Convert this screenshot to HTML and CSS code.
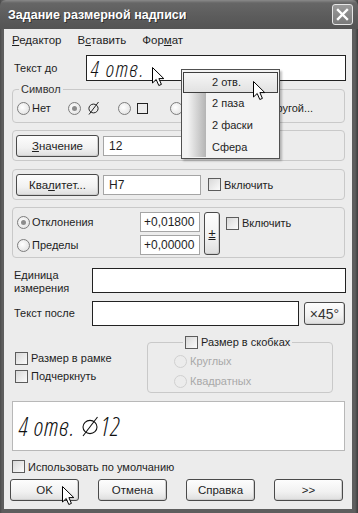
FILE: index.html
```html
<!DOCTYPE html>
<html lang="ru">
<head>
    <meta charset="UTF-8" />
    <title>Задание размерной надписи</title>
    <link rel="stylesheet" href="styles.css">
</head>
<body>
    <div class="window">
        <div class="titlebar">
            <span class="title">Задание размерной надписи</span>
            <span class="close">
                <svg width="13" height="13" viewBox="0 0 13 13"><path d="M2 2 L11 11 M11 2 L2 11" stroke="#fff" stroke-width="2.4" stroke-linecap="square"/></svg>
            </span>
        </div>
        <div class="client">
            <div class="menubar">
                <span><u>Р</u>едактор</span>
                <span>В<u>с</u>тавить</span>
                <span>Фор<u>м</u>ат</span>
            </div>

            <div class="row row-before">
                <span class="label">Текст до</span>
                <div class="field dark big script">4 отв.</div>
            </div>

            <fieldset class="group symbol">
                <legend>Символ</legend>
                <div class="radio-row">
                    <span class="opt w51"><span class="radio"></span>Нет</span>
                    <span class="opt w50"><span class="radio on"></span>
                        <svg class="diam" width="13" height="14" viewBox="0 0 13 14"><ellipse cx="6.5" cy="7.5" rx="4.6" ry="4.4" fill="none" stroke="#222" stroke-width="1"/><path d="M2 13.5 L11.5 1" stroke="#222" stroke-width="1"/></svg>
                    </span>
                    <span class="opt w52"><span class="radio"></span><span class="sq"></span></span>
                    <span class="opt w84"><span class="radio"></span>R</span>
                    <span class="opt"><span class="radio"></span>Другой...</span>
                </div>
            </fieldset>

            <div class="panel panel-value">
                <span class="btn btn-side"><u>З</u>начение</span>
                <div class="field light w-val">12</div>
            </div>

            <div class="panel panel-kval">
                <span class="btn btn-side">Ква<u>л</u>итет...</span>
                <div class="field light w-val">H7</div>
                <span class="check-label"><span class="check"></span>Включить</span>
            </div>

            <div class="panel panel-dev">
                <span class="opt"><span class="radio on"></span>Отклонения</span>
                <div class="field light num">+0,01800</div>
                <span class="btn btn-pm"><u>±</u></span>
                <span class="check-label dev-check"><span class="check"></span>Включить</span>
                <span class="opt"><span class="radio"></span>Пределы</span>
                <div class="field light num">+0,00000</div>
            </div>

            <div class="row row-unit">
                <span class="label label-wide">Единица<br>измерения</span>
                <div class="field dark w-unit"></div>
            </div>

            <div class="row row-after">
                <span class="label label-wide">Текст после</span>
                <div class="field dark w-after"></div>
                <span class="btn btn-deg">×45°</span>
            </div>

            <div class="options">
                <div class="opt-left">
                    <span class="check-label"><span class="check"></span>Размер в рамке</span>
                    <span class="check-label"><span class="check"></span>Подчеркнуть</span>
                </div>
                <fieldset class="group brackets">
                    <legend><span class="check-label"><span class="check"></span>Размер в скобках</span></legend>
                    <span class="opt disabled"><span class="radio"></span>Круглых</span>
                    <span class="opt disabled"><span class="radio"></span>Квадратных</span>
                </fieldset>
            </div>

            <div class="preview script">
                <span>4 отв.</span>
                <svg class="diam-big" width="20" height="22" viewBox="0 0 20 22"><ellipse cx="10" cy="12" rx="7" ry="6.6" fill="none" stroke="#111" stroke-width="1.1"/><path d="M3 21 L17.5 2" stroke="#111" stroke-width="1.1"/></svg>
                <span>12</span>
            </div>

            <div class="row row-default">
                <span class="check-label"><span class="check"></span>Использовать по умолчанию</span>
            </div>

            <div class="buttons">
                <span class="btn">OK</span>
                <span class="btn">Отмена</span>
                <span class="btn">Справка</span>
                <span class="btn">&gt;&gt;</span>
            </div>
        </div>

        <!-- dropdown list of the "Текст до" field -->
        <div class="popup">
            <div class="gutter"></div>
            <div class="item active">2 отв.</div>
            <div class="item">2 паза</div>
            <div class="item">2 фаски</div>
            <div class="item">Сфера</div>
        </div>

        <svg class="cursor cur-1" width="13" height="20" viewBox="0 0 13 20"><path d="M0.5 0.5 L0.5 16 L4.2 12.5 L6.8 18.5 L9.4 17.4 L6.9 11.6 L11.8 11.6 Z" fill="#fff" stroke="#000" stroke-width="1"/></svg>
        <svg class="cursor cur-2" width="13" height="20" viewBox="0 0 13 20"><path d="M0.5 0.5 L0.5 16 L4.2 12.5 L6.8 18.5 L9.4 17.4 L6.9 11.6 L11.8 11.6 Z" fill="#fff" stroke="#000" stroke-width="1"/></svg>
        <svg class="cursor cur-3" width="13" height="20" viewBox="0 0 13 20"><path d="M0.5 0.5 L0.5 16 L4.2 12.5 L6.8 18.5 L9.4 17.4 L6.9 11.6 L11.8 11.6 Z" fill="#fff" stroke="#000" stroke-width="1"/></svg>
    </div>
</body>
</html>
```

FILE: styles.css
```css
:root {
    --face: #ececec;
    --frame: #5e5e5e;
    --line: #c9c9c9;
    --dark: #1e1e1e;
    --gray-text: #a9a9a9;
}
* {
    margin: 0;
    padding: 0;
    box-sizing: border-box;
}
body {
    font-family: "Liberation Sans", Arial, sans-serif;
    font-size: 11px;
    color: var(--dark);
    background: #fff;
}
u {
    text-decoration: underline;
    text-underline-offset: 1px;
}
/* Window frame */
.window {
    position: relative;
    width: 358px;
    height: 513px;
    background: linear-gradient(to right, #4a4a4a, var(--frame) 2px, var(--frame) 355px, #3c3c3c);
    display: flex;
    flex-direction: column;
    overflow: hidden;
}
.titlebar {
    height: 29px;
    flex: none;
    display: flex;
    align-items: center;
    justify-content: space-between;
    padding: 0 5px 0 8px;
    background: linear-gradient(#8a8a8a, #666 3px, #5b5b5b 60%, #545454);
    border-radius: 6px 6px 0 0;
}
.title {
    color: #fff;
    font-weight: 700;
    font-size: 12.5px;
    text-shadow: 1px 1px 0 #333;
}
.close {
    width: 21px;
    height: 21px;
    border: 1px solid #e6e6e6;
    border-radius: 3px;
    background: linear-gradient(#9a9a9a, #7a7a7a);
    display: flex;
    align-items: center;
    justify-content: center;
}
.client {
    flex: 1;
    margin: 0 6px 4px 4px;
    background: var(--face);
    display: flex;
    flex-direction: column;
}
/* Menu */
.menubar {
    height: 22px;
    display: flex;
    align-items: center;
    gap: 16px;
    padding-left: 8px;
    font-size: 11.5px;
}
/* Generic rows */
.row {
    display: flex;
    align-items: center;
    padding-left: 10px;
}
.label {
    width: 72px;
    flex: none;
}
.label-wide {
    width: 78px;
    line-height: 13px;
}
.field {
    background: #fff;
    display: flex;
    align-items: center;
    padding-left: 5px;
    flex: none;
}
.field.dark {
    border: 1px solid #222;
}
.field.light {
    border: 1px solid #a5a5a5;
    height: 20px;
}
.script {
    font-family: "Open Sans", "DejaVu Sans", sans-serif;
    font-style: italic;
    font-weight: 300;
    font-stretch: 80%;
    color: #111;
}
.row-before {
    margin-top: 4px;
    height: 26px;
}
.big {
    width: 260px;
    height: 26px;
    font-size: 22px;
    letter-spacing: 1.5px;
    padding-left: 4px;
}
/* Groups and panels */
.group {
    border: 1px solid var(--line);
    border-radius: 4px;
    min-width: 0;
}
.group legend {
    line-height: 14px;
    padding: 0 2px;
}
.symbol {
    margin: 1px 7px 0 8px;
    padding: 5px 4px 7px;
}
.symbol legend {
    margin-left: 2px;
    color: #333;
}
.radio-row {
    display: flex;
    align-items: center;
    height: 14px;
}
.opt {
    display: flex;
    align-items: center;
    gap: 2px;
    height: 14px;
}
.w51 { width: 51px; }
.w50 { width: 50px; }
.w52 { width: 52px; }
.w84 { width: 84px; }
.radio {
    width: 13px;
    height: 13px;
    border: 1px solid #7d7d7d;
    border-radius: 50%;
    background: radial-gradient(circle at 40% 40%, #fff, #dcdcdc);
    flex: none;
    display: flex;
    align-items: center;
    justify-content: center;
}
.radio.on::after {
    content: "";
    width: 5px;
    height: 5px;
    border-radius: 50%;
    background: #8c8c8c;
}
.diam {
    margin-left: 4px;
}
.sq {
    width: 11px;
    height: 11px;
    border: 1px solid #222;
    margin-left: 4px;
}
.panel {
    margin: 7px 7px 0 8px;
    border: 1px solid var(--line);
    border-radius: 4px;
    display: flex;
    align-items: center;
    padding: 0 3px;
}
.panel-value {
    height: 31px;
}
.panel-kval {
    margin-top: 8px;
    height: 31px;
}
.btn {
    display: flex;
    align-items: center;
    justify-content: center;
    height: 22px;
    border: 1px solid #4a4a4a;
    border-radius: 3px;
    background: linear-gradient(#fdfdfd, #f1f1f1 60%, #dedede);
    box-shadow: inset -1px -1px 0 #cfcfcf;
    flex: none;
    font-size: 11.5px;
}
.btn-side {
    width: 83px;
}
.w-val {
    width: 98px;
    margin-left: 4px;
    font-size: 12px;
}
.check-label {
    display: flex;
    align-items: center;
    gap: 3px;
}
.check {
    width: 13px;
    height: 13px;
    border: 1px solid #5c5c5c;
    background: linear-gradient(135deg, #d8d8d8, #fbfbfb);
    flex: none;
}
.panel-kval .check-label {
    margin-left: 7px;
}
.panel-dev {
    margin-top: 7px;
    height: 51px;
    display: grid;
    grid-template-columns: 120px 60px 16px auto;
    grid-template-rows: 20px 20px;
    column-gap: 4px;
    row-gap: 3px;
    align-items: center;
    align-content: start;
    padding: 4px 3px 0;
}
.panel-dev .opt {
    padding-left: 1px;
}
.num {
    width: 60px;
    padding-left: 3px;
    font-size: 12px;
}
.btn-pm {
    grid-row: 1 / 3;
    grid-column: 3;
    height: 43px;
    width: 16px;
    font-size: 13px;
}
.dev-check {
    margin-left: 2px;
    padding-top: 2px;
}
.row-unit {
    margin-top: 10px;
    height: 25px;
}
.row-unit .label {
    padding-top: 3px;
}
.w-unit {
    width: 254px;
    height: 25px;
}
.row-after {
    margin-top: 8px;
    height: 25px;
}
.w-after {
    width: 207px;
    height: 25px;
}
.btn-deg {
    width: 41px;
    height: 23px;
    margin-left: 5px;
    font-size: 14px;
    color: #333;
}
/* Frame / underline options */
.options {
    margin-top: 9px;
    display: flex;
}
.opt-left {
    width: 143px;
    padding: 14px 0 0 11px;
    display: flex;
    flex-direction: column;
}
.opt-left .check-label {
    height: 18px;
}
.brackets {
    width: 186px;
    padding: 5px 0 4px 26px;
    display: flex;
    flex-direction: column;
    gap: 6px;
}
.brackets legend {
    margin-left: 9px;
}
.opt.disabled {
    color: var(--gray-text);
    gap: 3px;
}
.opt.disabled .radio {
    border-color: #d0d0d0;
    background: #ececec;
}
.preview {
    margin: 8px 7px 0 8px;
    height: 50px;
    border: 1px solid #b8b8b8;
    background: #fff;
    display: flex;
    align-items: center;
    padding-left: 6px;
    font-size: 25px;
    letter-spacing: 0.8px;
}
.diam-big {
    margin: 0 1px 0 5px;
}
.row-default {
    margin-top: 9px;
    height: 13px;
    padding-left: 8px;
}
.buttons {
    margin-top: 6px;
    display: flex;
    gap: 19px;
    padding-left: 6px;
}
.buttons .btn {
    width: 69px;
    height: 22px;
}
/* Dropdown list */
.popup {
    position: absolute;
    left: 181px;
    top: 69px;
    width: 99px;
    height: 90px;
    border: 1px solid #505050;
    background: #f3f3f3;
    box-shadow: 2px 2px 2px rgba(0,0,0,0.25);
    padding: 2px 1px;
    z-index: 10;
}
.gutter {
    position: absolute;
    left: 6px;
    top: 23px;
    bottom: 1px;
    width: 18px;
    background: linear-gradient(to right, #f2f2f2, #b4b4b4);
}
.item {
    position: relative;
    height: 22px;
    line-height: 21px;
    padding-left: 29px;
}
.item.active {
    height: 21px;
    line-height: 19px;
    border: 1px solid #3e3e3e;
    background: linear-gradient(#f6f6f6, #e2e2e2);
    padding-left: 28px;
}
.cursor {
    position: absolute;
    z-index: 20;
}
.cur-1 { left: 152px; top: 67px; }
.cur-2 { left: 253px; top: 81px; }
.cur-3 { left: 62px; top: 486px; }
```
